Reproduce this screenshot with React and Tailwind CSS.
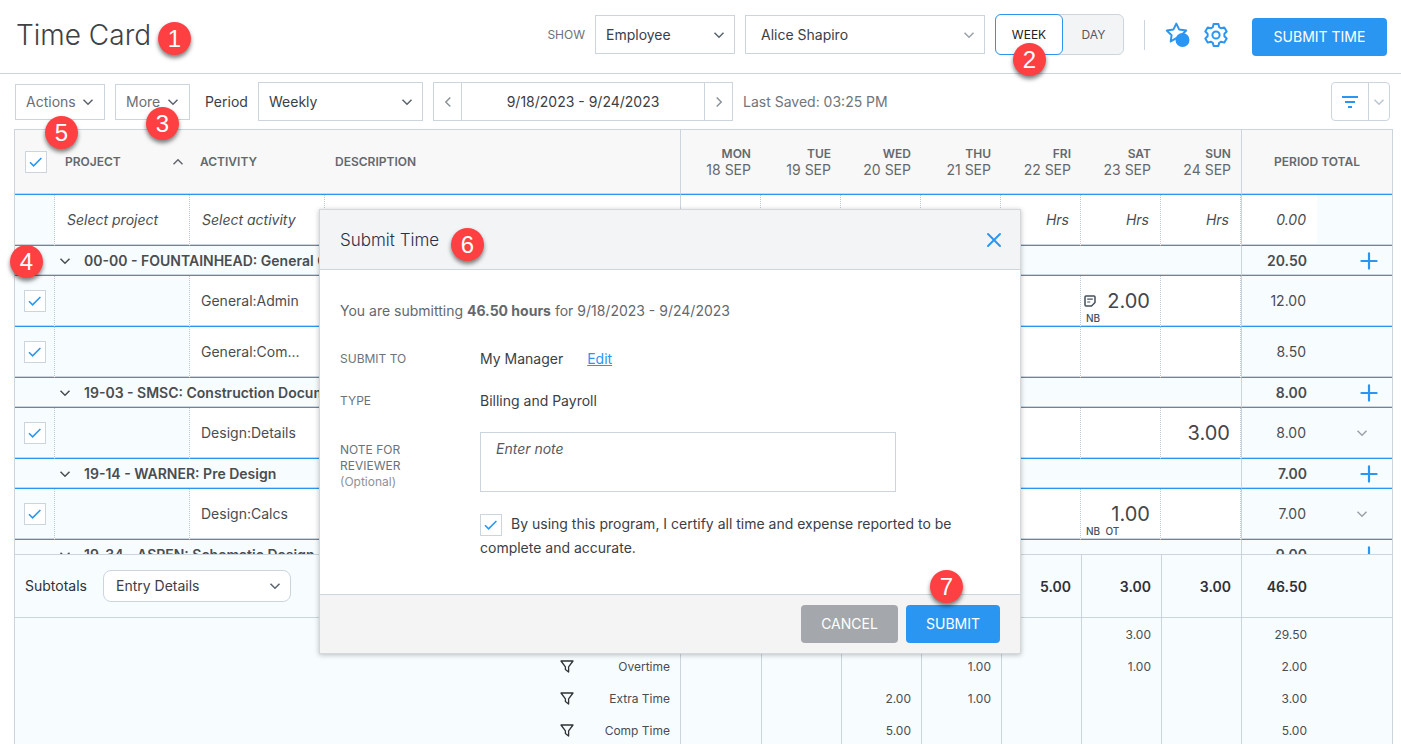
import React from 'react';
import { Plus, X } from 'lucide-react';

const days = [
    { day: 'MON', date: '18 SEP' },
    { day: 'TUE', date: '19 SEP' },
    { day: 'WED', date: '20 SEP' },
    { day: 'THU', date: '21 SEP' },
    { day: 'FRI', date: '22 SEP' },
    { day: 'SAT', date: '23 SEP' },
    { day: 'SUN', date: '24 SEP' }
];

const groups = [
    {
        name: '00-00 - FOUNTAINHEAD: General Overhead',
        total: '20.50',
        rows: [
            { activity: 'General:Admin', total: '12.00', hours: { SAT: { value: '2.00', tags: 'NB', note: true } } },
            { activity: 'General:Com...', total: '8.50', hours: {} }
        ]
    },
    {
        name: '19-03 - SMSC: Construction Documents',
        total: '8.00',
        rows: [{ activity: 'Design:Details', total: '8.00', menu: true, hours: { SUN: { value: '3.00' } } }]
    },
    {
        name: '19-14 - WARNER: Pre Design',
        total: '7.00',
        rows: [{ activity: 'Design:Calcs', total: '7.00', menu: true, hours: { SAT: { value: '1.00', tags: 'NB  OT' } } }]
    },
    { name: '19-34 - ASPEN: Schematic Design', total: '9.00', rows: [] }
];

const subtotals = [
    { label: '', total: '29.50', hours: { SAT: '3.00' } },
    { label: 'Overtime', total: '2.00', hours: { THU: '1.00', SAT: '1.00' } },
    { label: 'Extra Time', total: '3.00', hours: { WED: '2.00', THU: '1.00' } },
    { label: 'Comp Time', total: '5.00', hours: { WED: '5.00' } }
];

const dayTotals = { FRI: '5.00', SAT: '3.00', SUN: '3.00' };

const Chevron = ({ className = '' }) => (
    <svg viewBox="0 0 12 8" fill="none" stroke="currentColor" strokeWidth="1.5" className={`pointer-events-none h-2 w-3 ${className}`}>
        <path d="M1.5 1.7 6 6.2 10.5 1.7" />
    </svg>
);

const Callout = ({ n, className }) => (
    <span className={`absolute z-30 flex h-[33px] w-[33px] items-center justify-center rounded-full bg-[#fe4042] pt-px font-['Liberation_Sans',sans-serif] text-2xl leading-none text-white shadow-[0_3px_4px_rgba(0,0,0,0.5)] ${className}`}>
        {n}
    </span>
);

const Select = ({ label, value, className, chevron = 'text-[#5b636d]' }) => (
    <div className="grid items-center">
        <select aria-label={label} defaultValue={value} className={`col-start-1 row-start-1 appearance-none border border-[#ccd5de] bg-white text-sm text-[#3b4045] ${className}`}>
            <option>{value}</option>
        </select>
        <Chevron className={`col-start-1 row-start-1 mr-2.5 justify-self-end ${chevron}`} />
    </div>
);

const Check = ({ label, id }) => (
    <span className="inline-grid h-[22px] w-[22px] place-items-center align-middle">
        <input id={id} type="checkbox" defaultChecked aria-label={label} className="col-start-1 row-start-1 h-[22px] w-[22px] appearance-none border border-[#ccd5de] bg-white" />
        <svg viewBox="0 0 14 10" fill="none" stroke="#2b96f1" strokeWidth="1.6" className="pointer-events-none col-start-1 row-start-1 h-2.5 w-3.5">
            <path d="M1 5.2 4.6 8.8 12.4 1" />
        </svg>
    </span>
);

const Columns = () => (
    <colgroup>
        <col className="w-10" />
        <col className="w-[135px]" />
        <col className="w-[135px]" />
        <col />
        {days.map(d => <col key={d.day} className="w-20" />)}
        <col className="w-[76px]" />
        <col className="w-[75px]" />
    </colgroup>
);

const line = 'border-b border-b-[#2b96f1] shadow-[inset_0_-1px_0_#ccd5de]';
const dotted = 'border-r border-r-[#bccad8] [border-right-style:dotted]';

const Header = () => (
    <header className="flex h-[74px] shrink-0 items-start justify-between border-b border-[#ccd5de] pt-3.5 pr-3.5 pl-4">
        <h1 className="relative text-[28px] leading-[42px] font-light text-[#3f4245]">
            Time Card
            <Callout n="1" className="top-2 left-[142px]" />
        </h1>
        <div className="flex items-start">
            <div className="flex h-[41px] items-center">
                <span className="mr-2.5 text-xs text-[#6a727b]">SHOW</span>
                <Select label="Show" value="Employee" className="h-[39px] w-[140px] pl-2.5" />
                <div className="ml-2.5">
                    <Select label="Employee" value="Alice Shapiro" className="h-[39px] w-[240px] pl-[15px]" chevron="text-[#9aa1a8]" />
                </div>
                <div className="relative ml-2.5 flex h-[41px] rounded-md border border-[#ccd5de] bg-[#f3f4f6] text-xs">
                    <button className="-m-px w-[68px] rounded-md border border-[#2b96f1] bg-white text-[#222]">WEEK</button>
                    <button className="w-[61px] pl-0.5 text-[#55595e]">DAY</button>
                    <Callout n="2" className="top-7 left-[17px]" />
                </div>
                <span className="ml-5 h-[30px] w-px bg-[#ccd5de]" />
                <button aria-label="Favorites" className="ml-5">
                    <svg viewBox="0 0 26 26" className="h-[26px] w-[26px]">
                        <path d="M11.3 1.6 14.1 7.4 21.2 8.6 16.2 13.3 17.3 19.8 11.3 16.2 5.7 19.4 6.6 13.2 1.8 8.6 8.5 7.4Z" fill="none" stroke="#2b96f1" strokeWidth="2" strokeLinejoin="round" />
                        <circle cx="17.5" cy="18" r="7" fill="#2b96f1" />
                    </svg>
                </button>
                <button aria-label="Settings" className="ml-3">
                    <svg viewBox="0 0 26 26" fill="none" stroke="#2b96f1" strokeWidth="2" strokeLinejoin="round" className="h-[26px] w-[26px]">
                        <path d="M10.6 2h4.8l.8 3.2 2 1.1 3.1-.9 2.4 4.1-2.3 2.3v2.4l2.3 2.3-2.4 4.1-3.1-.9-2 1.1-.8 3.2h-4.8l-.8-3.2-2-1.1-3.1.9-2.4-4.1 2.3-2.3v-2.4L2.3 9.5l2.4-4.1 3.1.9 2-1.1Z" />
                        <circle cx="13" cy="13" r="3.6" />
                    </svg>
                </button>
            </div>
            <button className="mt-1 ml-[23px] h-[38px] w-[135px] rounded bg-[#2b96f1] text-sm text-white">SUBMIT TIME</button>
        </div>
    </header>
);

const Toolbar = () => (
    <div className="flex h-[55px] shrink-0 items-center pr-[11px] pl-[15px] text-sm text-[#3b4045]">
        <button className="relative flex h-9 w-[90px] items-center justify-between border border-[#ccd5de] px-2.5 text-[#6a6f75]">
            Actions
            <Chevron className="text-[#5b636d]" />
            <Callout n="5" className="top-[31px] left-[29px]" />
        </button>
        <button className="relative ml-2.5 flex h-9 w-[75px] items-center justify-between border border-[#ccd5de] px-2.5 text-[#6a6f75]">
            More
            <Chevron className="text-[#5b636d]" />
            <Callout n="3" className="top-[22px] left-[30px]" />
        </button>
        <span className="mx-2.5 w-[48px] shrink-0 pl-[5px]">Period</span>
        <Select label="Period" value="Weekly" className="h-[39px] w-[165px] pl-2.5" />
        <div className="ml-2.5 flex h-[39px] w-[300px] border border-[#ccd5de]">
            <button aria-label="Previous period" className="flex w-[27px] items-center justify-center text-[#8b9299]"><Chevron className="rotate-90" /></button>
            <span className="flex flex-1 items-center justify-center border-x border-[#ccd5de]">9/18/2023 - 9/24/2023</span>
            <button aria-label="Next period" className="flex w-[27px] items-center justify-center text-[#8b9299]"><Chevron className="-rotate-90" /></button>
        </div>
        <span className="ml-2.5 text-[#6f757b]">Last Saved: 03:25 PM</span>
        <div className="ml-auto flex h-[39px] w-[59px] rounded-sm border border-[#ccd5de]">
            <button aria-label="Filter" className="flex flex-1 items-center justify-center border-r border-[#ccd5de]">
                <svg viewBox="0 0 16 12" fill="#2b96f1" className="h-3 w-4"><path d="M0 0h16v2H0zM3 5h10v2H3zM6 10h4v2H6z" /></svg>
            </button>
            <button aria-label="Filter options" className="flex w-5 items-center justify-center text-[#b9c6d1]"><Chevron /></button>
        </div>
    </div>
);

const HourCell = ({ entry }) => (
    <td className={`bg-white p-0 pr-2.5 text-right align-middle ${line} ${dotted}`}>
        {entry && (
            <div className="relative text-xl leading-6 text-[#44474a]">
                {entry.note && (
                    <svg viewBox="0 0 12 12" fill="none" stroke="#44505c" strokeWidth="1.5" strokeLinejoin="round" className="absolute top-1.5 left-[3px] h-3 w-3">
                        <path d="M2 1h8a1 1 0 0 1 1 1v5.5L7.5 11H2a1 1 0 0 1-1-1V2a1 1 0 0 1 1-1Z" />
                        <path d="M3.2 4.2h5.6M3.2 7h3" strokeWidth="1.2" />
                    </svg>
                )}
                {entry.value}
                {entry.tags && <span className="absolute top-[23px] left-[5px] text-[10px] leading-3 font-medium whitespace-pre text-[#44505c]">{entry.tags}</span>}
            </div>
        )}
    </td>
);

const Timesheet = () => (
    <table className="w-full table-fixed border-separate border-spacing-0 text-sm text-[#4a4d50]">
        <Columns />
        <thead>
            <tr className="h-[65px] bg-[#f8f8f8] text-left text-xs text-[#64686d]">
                <th className={`pl-2.5 ${line}`}><Check label="Select all rows" /></th>
                <th className={`px-2.5 font-semibold ${line}`}>
                    <div className="flex items-center justify-between">PROJECT<Chevron className="-mr-1 rotate-180" /></div>
                </th>
                <th className={`px-2.5 font-semibold ${line}`}>ACTIVITY</th>
                <th className={`border-r border-r-[#ccd5de] px-2.5 font-semibold ${line}`}>DESCRIPTION</th>
                {days.map(d => (
                    <th key={d.day} className={`pr-2.5 text-right leading-4 font-semibold ${line}`}>
                        {d.day}
                        <div className="text-sm leading-4 font-normal">{d.date}</div>
                    </th>
                ))}
                <th colSpan={2} className={`border-l border-l-[#ccd5de] text-center font-semibold ${line}`}>PERIOD TOTAL</th>
            </tr>
        </thead>
        <tbody>
            <tr className="h-[51px] italic">
                <td className={`bg-[#f7fcff] ${line} ${dotted}`} />
                <td className={`pl-3 ${line} ${dotted}`}>Select project</td>
                <td className={`pl-3 ${line} ${dotted}`}>Select activity</td>
                <td className={`border-r border-r-[#ccd5de] ${line}`} />
                {days.map(d => <td key={d.day} className={`pr-[11px] text-right ${line} ${dotted}`}>Hrs</td>)}
                <td className={`border-l border-l-[#ccd5de] pr-[11px] text-right ${line}`}>0.00</td>
                <td className={`bg-[#f7fcff] ${line}`} />
            </tr>
            {groups.map(g => (
                <React.Fragment key={g.name}>
                    <tr className="h-[30px] bg-[#f7fcff] font-semibold">
                        <td colSpan={4} className={`p-0 pl-11 ${line}`}>
                            <div className="flex items-center gap-[13px] whitespace-nowrap"><Chevron />{g.name}</div>
                        </td>
                        <td colSpan={7} className={line} />
                        <td className={`border-l border-l-[#ccd5de] p-0 pr-2.5 text-right ${line}`}>{g.total}</td>
                        <td className={`p-0 pr-2.5 ${line}`}>
                            <button aria-label="Add row" className="ml-auto block"><Plus size={26} strokeWidth={2} color="#2b96f1" /></button>
                        </td>
                    </tr>
                    {g.rows.map(row => (
                        <tr key={row.activity} className="h-[51px] bg-[#f7fcff]">
                            <td className={`p-0 pl-[9px] ${line} ${dotted}`}><Check label={`Select ${row.activity}`} /></td>
                            <td className={`${line} ${dotted}`} />
                            <td className={`bg-white p-0 pl-[11px] ${line} ${dotted}`}>{row.activity}</td>
                            <td className={`border-r border-r-[#ccd5de] bg-white ${line}`} />
                            {days.map(d => <HourCell key={d.day} entry={row.hours[d.day]} />)}
                            <td className={`border-l border-l-[#ccd5de] p-0 pr-[11px] text-right ${line}`}>{row.total}</td>
                            <td className={`p-0 pr-6 ${line}`}>
                                {row.menu && <button aria-label="Row menu" className="ml-auto block text-[#9aa1a8]"><Chevron /></button>}
                            </td>
                        </tr>
                    ))}
                </React.Fragment>
            ))}
        </tbody>
    </table>
);

const Subtotals = () => (
    <div className="h-[190px] shrink-0 overflow-hidden border-t border-[#ccd5de] bg-[#f7fcff]">
        <table className="w-full table-fixed border-separate border-spacing-0 text-xs text-[#4a4d50]">
            <Columns />
            <tbody>
                <tr className="h-[63px] text-sm font-semibold text-[#2f3236]">
                    <td colSpan={4} className="border-r border-b border-[#ccd5de] p-0 pl-2.5 font-normal">
                        <div className="flex items-center gap-4">
                            Subtotals
                            <Select label="Subtotals" value="Entry Details" className="h-8 w-[188px] rounded-lg pl-3" />
                        </div>
                    </td>
                    {days.map((d, i) => (
                        <td key={d.day} className={`border-b border-[#ccd5de] p-0 pt-px pr-2.5 text-right ${i > 0 ? 'border-l' : ''}`}>{dayTotals[d.day]}</td>
                    ))}
                    <td className="border-b border-l border-[#ccd5de] p-0 pt-px pr-2.5 text-right">46.50</td>
                    <td className="border-b border-[#ccd5de]" />
                </tr>
                {subtotals.map(s => (
                    <tr key={s.label} className="h-8">
                        <td colSpan={4} className="border-r border-[#ccd5de] p-0 pt-px pr-2.5">
                            {s.label && (
                                <div className="flex items-center justify-end">
                                    <svg viewBox="0 0 14 13" fill="none" stroke="#2f3236" strokeWidth="1.3" strokeLinejoin="round" className="h-[13px] w-3.5">
                                        <path d="M1 1h12L8.6 6.8V12L5.4 9.6V6.8Z" />
                                    </svg>
                                    <span className="w-24 text-right">{s.label}</span>
                                </div>
                            )}
                        </td>
                        {days.map((d, i) => (
                            <td key={d.day} className={`border-[#ccd5de] p-0 pt-px pr-2.5 text-right ${i > 0 ? 'border-l' : ''}`}>{s.hours[d.day]}</td>
                        ))}
                        <td className="border-l border-[#ccd5de] p-0 pt-px pr-2.5 text-right">{s.total}</td>
                        <td />
                    </tr>
                ))}
            </tbody>
        </table>
    </div>
);

const SubmitDialog = () => (
    <div role="dialog" aria-label="Submit Time" className="absolute top-[209px] left-[319px] z-20 w-[702px] border border-[#d3d8dd] bg-white text-sm leading-5 text-[#3b4045] shadow-[0_1px_5px_rgba(0,0,0,0.25)]">
        <div className="flex h-[60px] items-center justify-between border-b border-[#ccd5de] bg-[#f3f4f6] pr-3.5 pl-5">
            <h2 className="relative text-[17px] leading-6 font-light text-[#2c2f4a]">
                Submit Time
                <Callout n="6" className="top-0 left-[111px]" />
            </h2>
            <button aria-label="Close"><X size={24} strokeWidth={2} color="#2b96f1" /></button>
        </div>
        <div className="px-5 pt-[31px] pb-[34px]">
            <p className="text-[#64686d]">You are submitting <b className="font-bold">46.50 hours</b> for 9/18/2023 - 9/24/2023</p>
            <div className="mt-7 flex">
                <span className="w-[140px] text-xs leading-5 text-[#6a727b]">SUBMIT TO</span>
                My Manager
                <a href="#edit" className="ml-6 text-[#2b96f1] underline">Edit</a>
            </div>
            <div className="mt-[22px] flex">
                <span className="w-[140px] text-xs leading-5 text-[#6a727b]">TYPE</span>
                Billing and Payroll
            </div>
            <div className="mt-[21px] flex items-start">
                <label htmlFor="note" className="w-[140px] pt-2.5 text-xs leading-4 text-[#6a727b]">
                    NOTE FOR<br />REVIEWER<br /><span className="text-[#8d9298]">(Optional)</span>
                </label>
                <textarea id="note" placeholder="Enter note" className="h-[60px] w-[416px] resize-none border border-[#ccd5de] px-[15px] py-1.5 placeholder:text-[#55595e] placeholder:italic" />
            </div>
            <div className="mt-5 ml-[140px] w-[500px] leading-6">
                <Check id="certify" label="Certify" />
                <label htmlFor="certify" className="pl-[9px]">By using this program, I certify all time and expense reported to be complete and accurate.</label>
            </div>
        </div>
        <div className="relative flex h-[59px] justify-end gap-2 border-t border-[#ccd5de] bg-[#f4f4f4] pt-2.5 pr-5">
            <button className="h-[38px] w-[97px] rounded bg-[#a4a7ab] text-white">CANCEL</button>
            <button className="h-[38px] w-[94px] rounded bg-[#2b96f1] text-white">SUBMIT</button>
            <Callout n="7" className="-top-[25px] right-[57px]" />
        </div>
    </div>
);

const App = () => (
    <div className="relative flex h-screen flex-col overflow-hidden bg-white font-['Inter',sans-serif]">
        <Header />
        <Toolbar />
        <main className="relative mr-2 ml-3.5 flex min-h-0 flex-1 flex-col border border-b-0 border-[#ccd5de]">
            <Callout n="4" className="top-[115px] -left-[5px]" />
            <div className="min-h-0 flex-1 overflow-hidden">
                <Timesheet />
            </div>
            <Subtotals />
        </main>
        <SubmitDialog />
    </div>
);

export default App;
